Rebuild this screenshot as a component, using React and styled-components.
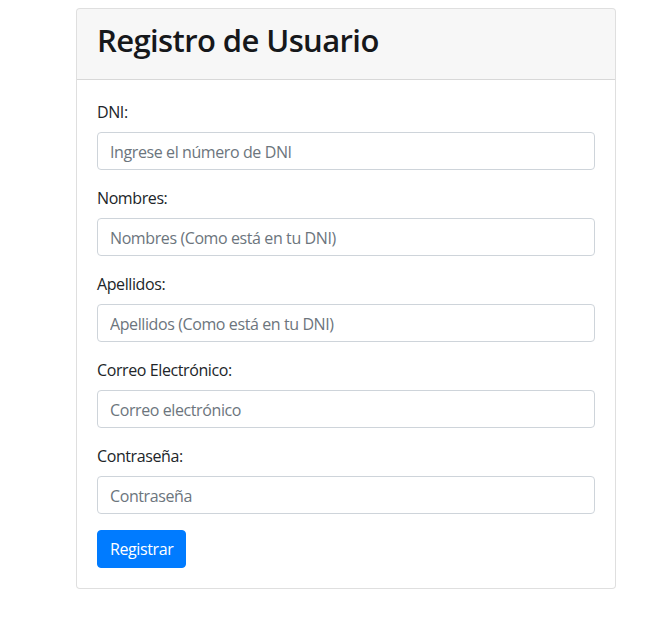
import React from 'react';
import styled, { createGlobalStyle } from 'styled-components';

const GlobalStyle = createGlobalStyle`
    *, *::before, *::after { box-sizing: border-box; }
    body {
        margin: 0;
        background: #fff;
        font-family: "Segoe UI", "Open Sans", "Noto Sans", sans-serif;
        color: #212529;
        font-size: 16px;
        line-height: 1.5;
        letter-spacing: -0.4px;
    }
`;

const fields = [
    { id: 'dni', label: 'DNI:', placeholder: 'Ingrese el número de DNI', type: 'text' },
    { id: 'nombres', label: 'Nombres:', placeholder: 'Nombres (Como está en tu DNI)', type: 'text' },
    { id: 'apellidos', label: 'Apellidos:', placeholder: 'Apellidos (Como está en tu DNI)', type: 'text' },
    { id: 'correo', label: 'Correo Electrónico:', placeholder: 'Correo electrónico', type: 'email' },
    { id: 'password', label: 'Contraseña:', placeholder: 'Contraseña', type: 'password' },
];

const App = () => {
    return (
        <>
            <GlobalStyle />
            <Page>
                <Card>
                    <CardHeader>
                        <Title>Registro de Usuario</Title>
                    </CardHeader>
                    <CardBody>
                        <form onSubmit={(e) => e.preventDefault()}>
                            {fields.map((f) => (
                                <FormGroup key={f.id}>
                                    <Label htmlFor={f.id}>{f.label}</Label>
                                    <Input id={f.id} type={f.type} placeholder={f.placeholder} />
                                </FormGroup>
                            ))}
                            <Button type="submit">Registrar</Button>
                        </form>
                    </CardBody>
                </Card>
            </Page>
        </>
    );
};

export default App;

const Page = styled.div`
    padding: 8px 0 0 76px;
`;

const Card = styled.div`
    width: 540px;
    background: #fff;
    border: 1px solid rgba(0, 0, 0, 0.125);
    border-radius: 4px;
    overflow: hidden;
`;

const CardHeader = styled.div`
    background: rgba(0, 0, 0, 0.03);
    border-bottom: 1px solid rgba(0, 0, 0, 0.125);
    padding: 12px 20px;
`;

const Title = styled.h2`
    margin: 0 0 8px;
    font-size: 31px;
    font-weight: 600;
    line-height: 38px;
    letter-spacing: -0.6px;
    color: #16181b;
`;

const CardBody = styled.div`
    padding: 20px;
`;

const FormGroup = styled.div`
    margin-bottom: 16px;
`;

const Label = styled.label`
    display: inline-block;
    margin-bottom: 8px;
`;

const Input = styled.input`
    display: block;
    width: 100%;
    height: 38px;
    padding: 7px 12px 5px;
    font: inherit;
    letter-spacing: inherit;
    color: #495057;
    background: #fff;
    border: 1px solid #ced4da;
    border-radius: 4px;

    &::placeholder {
        color: #6c757d;
        opacity: 1;
    }
`;

const Button = styled.button`
    display: inline-block;
    height: 38px;
    padding: 6px 12px;
    font: inherit;
    letter-spacing: inherit;
    color: #fff;
    background: #007bff;
    border: 1px solid #007bff;
    border-radius: 4px;
    cursor: pointer;
`;
